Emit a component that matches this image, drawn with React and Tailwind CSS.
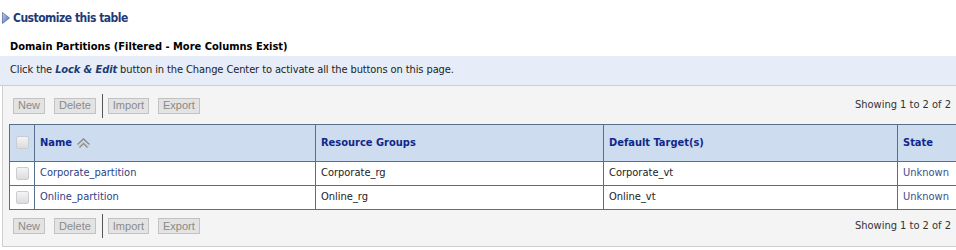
import React from "react";

const FONT = "font-['DejaVu_Sans_Condensed','DejaVu_Sans',sans-serif]";

const rows = [
  { name: "Corporate_partition", rg: "Corporate_rg", target: "Corporate_vt", state: "Unknown" },
  { name: "Online_partition", rg: "Online_rg", target: "Online_vt", state: "Unknown" },
];

function Check() {
  return (
    <span className="inline-block w-[13px] h-[13px] rounded-[2px] border border-[#c9cdd2] bg-gradient-to-b from-[#f4f4f4] to-[#dcdcdc] align-middle" />
  );
}

function Btn({ children }) {
  return (
    <span className="h-[16px] px-[4px] flex items-center border border-[#c2c2c2] bg-[#e3e3e3] text-[#8a8a8a] text-[11px] leading-none font-['Liberation_Sans',Arial,sans-serif]">
      {children}
    </span>
  );
}

function Toolbar({ className }) {
  return (
    <div className={`flex items-center justify-between pl-[10px] pr-[5px] ${className}`}>
      <div className="flex items-center">
        <Btn>New</Btn>
        <span className="ml-[9px]">
          <Btn>Delete</Btn>
        </span>
        <span className="ml-[6px] mr-[5px] w-px h-[24px] bg-[#555]" />
        <Btn>Import</Btn>
        <span className="ml-[9px]">
          <Btn>Export</Btn>
        </span>
      </div>
      <span className="text-[11px] text-[#333]">Showing 1 to 2 of 2</span>
    </div>
  );
}

function SortIcon() {
  return (
    <svg width="15" height="11" viewBox="0 0 15 11" className="ml-[4px]">
      <polyline points="1.5,6.5 7.5,1 13.5,6.5" fill="none" stroke="#8a8a8a" strokeWidth="1.3" />
      <polyline points="3.5,9.5 7.5,5.5 11.5,9.5" fill="none" stroke="#8a8a8a" strokeWidth="1.3" />
      <polyline points="1.5,9.5 7.5,4 13.5,9.5" fill="none" stroke="#c4c4c4" strokeWidth="0.8" />
    </svg>
  );
}

export default function App() {
  return (
    <div className={`w-[956px] h-[250px] bg-white overflow-hidden ${FONT}`}>
      <div className="h-[36px] flex items-center pl-[2px]">
        <svg width="8" height="12" viewBox="0 0 8 12">
          <defs>
            <linearGradient id="tri" x1="0" y1="0" x2="1" y2="1">
              <stop offset="0" stopColor="#c8d4ec" />
              <stop offset="1" stopColor="#4a62a8" />
            </linearGradient>
          </defs>
          <polygon points="0.5,0.5 7.5,6 0.5,11.5" fill="url(#tri)" stroke="#5a6fa8" strokeWidth="0.8" />
        </svg>
        <span className="ml-[3px] text-[12px] tracking-[-0.5px] font-bold text-[#1d3b76]">Customize this table</span>
      </div>
      <div className="h-[20px] pt-[2px] pl-[10px] text-[11px] leading-[18px] font-bold text-black">
        Domain Partitions (Filtered - More Columns Exist)
      </div>
      <div className="h-[30px] flex items-center pl-[10px] bg-[#e6edf8] border-b border-[#c9ced6] text-[11px] tracking-[-0.1px] text-[#222]">
        Click the&nbsp;<i className="font-bold text-[#1d3b76]">Lock &amp; Edit</i>&nbsp;button in the Change Center to activate all the buttons on this page.
      </div>
      <div className="ml-[2px] border-l border-b border-[#cfcfcf] bg-[#f4f4f4]">
        <Toolbar className="h-[39px]" />
        <div className="pl-[6px] -mt-px">
          <table className="w-[1000px] table-fixed border-collapse text-[11px]">
            <colgroup>
              <col className="w-[25px]" />
              <col className="w-[281px]" />
              <col className="w-[288px]" />
              <col className="w-[294px]" />
              <col />
            </colgroup>
            <thead>
              <tr className="h-[37px] bg-[#cddcef]">
                <th className="border border-[#56708c] text-center">
                  <Check />
                </th>
                <th className="border border-[#56708c] pl-[5px] text-left">
                  <span className="flex items-center font-bold text-[#10288a]">
                    Name
                    <SortIcon />
                  </span>
                </th>
                <th className="border border-[#56708c] pl-[5px] text-left font-bold text-[#10288a]">Resource Groups</th>
                <th className="border border-[#56708c] pl-[5px] text-left font-bold text-[#10288a]">Default Target(s)</th>
                <th className="border border-[#56708c] pl-[5px] text-left font-bold text-[#10288a]">State</th>
              </tr>
            </thead>
            <tbody>
              {rows.map((r) => (
                <tr key={r.name} className="h-[24px] bg-white">
                  <td className="border border-[#56708c] text-center">
                    <Check />
                  </td>
                  <td className="border border-[#56708c] pl-[5px] text-[#2c3f86]">{r.name}</td>
                  <td className="border border-[#56708c] pl-[5px] text-[#222]">{r.rg}</td>
                  <td className="border border-[#56708c] pl-[5px] text-[#222]">{r.target}</td>
                  <td className="border border-[#56708c] pl-[5px] text-[#3a4f8a]">{r.state}</td>
                </tr>
              ))}
            </tbody>
          </table>
        </div>
        <Toolbar className="h-[32px] mb-[4px]" />
      </div>
    </div>
  );
}
